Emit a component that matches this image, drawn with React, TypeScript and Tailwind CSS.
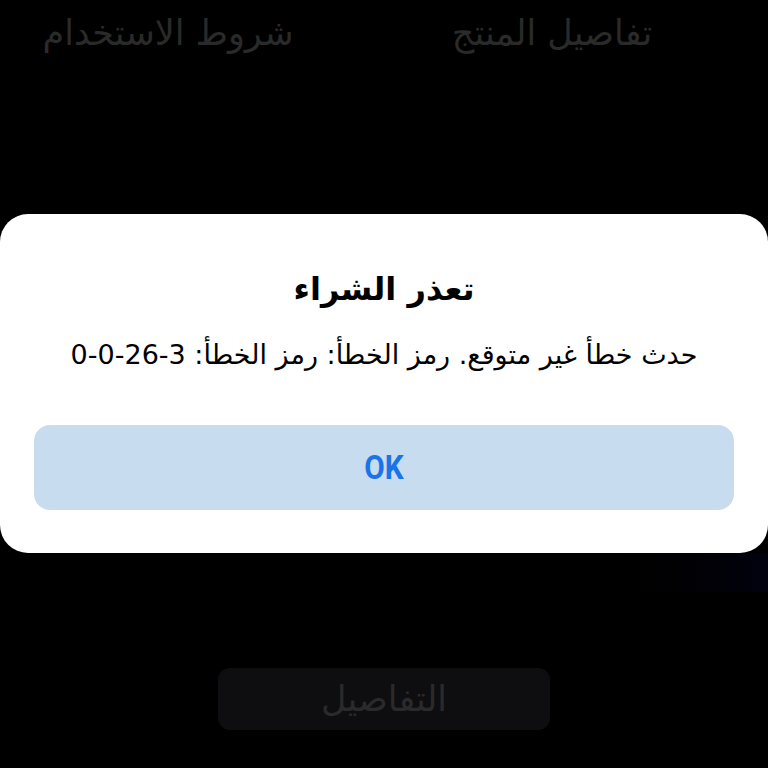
import React from "react";

const arabic = { fontFamily: '"DejaVu Sans", "Noto Sans", sans-serif' };

export default function App() {
    return (
        <div dir="ltr" className="w-[768px] h-[768px] bg-black overflow-hidden flex flex-col" style={arabic}>
            {/* Tabs behind the dialog */}
            <div className="flex gap-[24px] pt-[11px] h-[214px]">
                <div dir="rtl" className="w-[336px] text-center text-[35px] leading-[44px] text-[#2a2a2a]">شروط الاستخدام</div>
                <div dir="rtl" className="w-[384px] text-center text-[35px] leading-[44px] text-[#2a2a2a]">تفاصيل المنتج</div>
            </div>

            {/* Error dialog */}
            <div dir="rtl" className="h-[339px] bg-white rounded-[28px] flex flex-col items-center px-[34px]">
                <h2 className="mt-[53px] text-[32px] leading-[44px] font-bold text-black">تعذر الشراء</h2>
                <p className="mt-[25px] text-[27px] leading-[38px] text-black whitespace-nowrap">حدث خطأ غير متوقع. رمز الخطأ: رمز الخطأ: 3-26-0-0</p>
                <button className="mt-[51px] w-full h-[85px] rounded-[16px] bg-[#c8dcef] flex items-center justify-center">
                    <span className="text-[33px] leading-none font-bold text-[#1a73e8] scale-x-90" style={{ fontFamily: "Roboto, sans-serif" }}>OK</span>
                </button>
            </div>

            <div className="h-[39px] bg-gradient-to-r from-black from-70% to-[#02020f]" />

            {/* Bottom action */}
            <div className="flex justify-start pl-[218px] pt-[76px]">
                <div dir="rtl" className="w-[332px] h-[62px] rounded-[12px] bg-[#0e0e10] flex items-center justify-center text-[35px] text-[#2a2a2c]">
                    التفاصيل
                </div>
            </div>
        </div>
    );
}
